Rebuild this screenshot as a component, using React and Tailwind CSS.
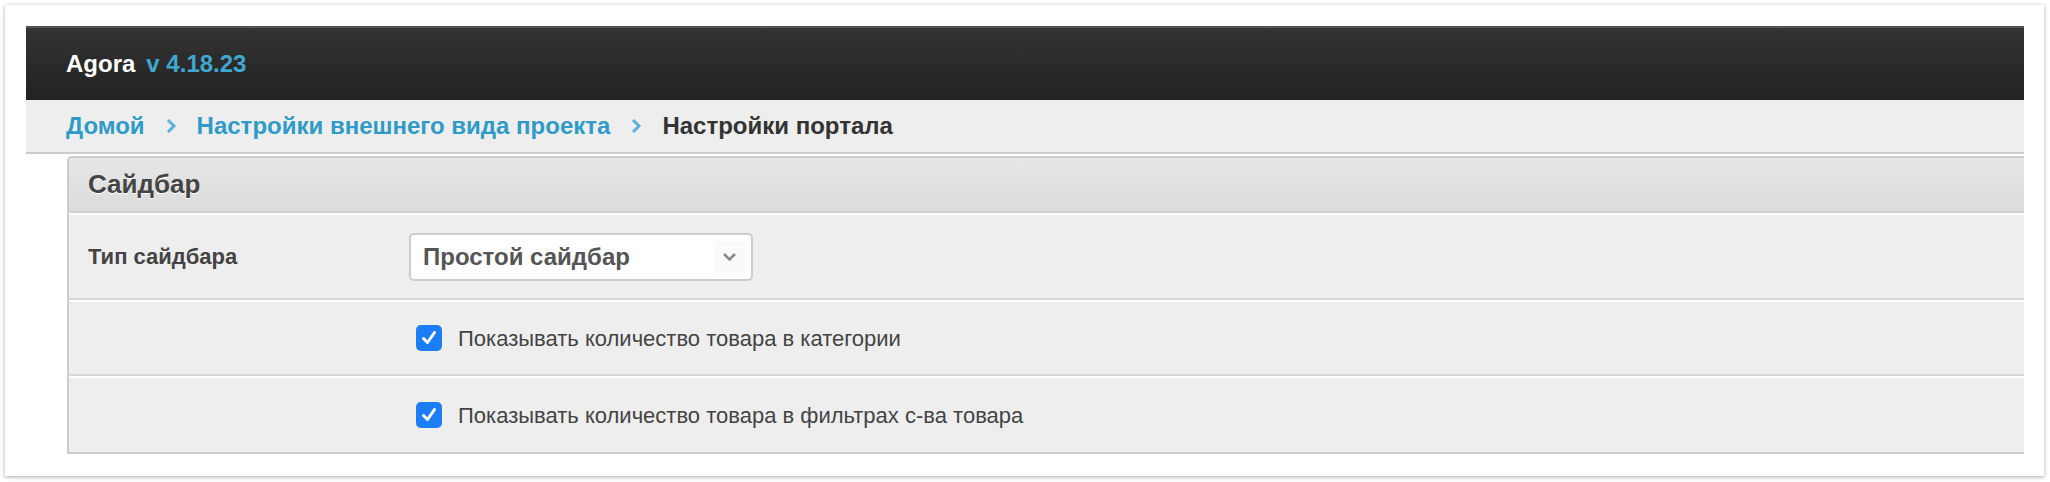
import React from "react";

const crumbs = [
  { label: "Домой", link: true },
  { label: "Настройки внешнего вида проекта", link: true },
  { label: "Настройки портала", link: false },
];

const options = [
  "Показывать количество товара в категории",
  "Показывать количество товара в фильтрах с-ва товара",
];

function Chevron() {
  return (
    <svg width="12" height="16" viewBox="0 0 12 16" className="mx-[20px]">
      <polyline points="3,2 9,8 3,14" fill="none" stroke="#5cb3d6" strokeWidth="3" />
    </svg>
  );
}

function Check() {
  return (
    <div className="w-[26px] h-[26px] rounded-[5px] bg-[#1b7ef6] flex items-center justify-center shrink-0">
      <svg width="18" height="18" viewBox="0 0 18 18">
        <polyline points="3.5,9.5 7.5,13.5 14.5,3.5" fill="none" stroke="#fff" strokeWidth="3" strokeLinecap="round" strokeLinejoin="round" />
      </svg>
    </div>
  );
}

export default function App() {
  return (
    <div className="w-[2050px] h-[482px] bg-white p-[5px] [font-family:'Liberation_Sans',Arial,sans-serif]">
      <div className="h-[471px] w-[2039px] bg-white shadow-[0_1px_4px_rgba(0,0,0,0.35)] pt-[21px] pl-[21px] pr-[20px] pb-[24px]">
        {/* top bar */}
        <div className="h-[74px] border-t-2 border-[#555] bg-gradient-to-b from-[#343434] to-[#222] flex items-center pl-[40px]">
          <span className="text-white font-bold text-[24px]">Agora</span>
          <span className="text-[#3fa8d0] font-bold text-[24px] ml-[11px]">v 4.18.23</span>
        </div>

        {/* breadcrumbs */}
        <div className="h-[54px] bg-[#eee] border-b-2 border-[#ccc] flex items-center pl-[40px]">
          {crumbs.map((c, i) => (
            <React.Fragment key={c.label}>
              {i > 0 && <Chevron />}
              <span className={`font-bold text-[24px] ${c.link ? "text-[#2f9bc6]" : "text-[#333]"}`}>{c.label}</span>
            </React.Fragment>
          ))}
        </div>

        {/* panel */}
        <div className="mt-[2px] ml-[41px] border-l-2 border-t-2 border-b-2 border-[#ccc] rounded-tl-[5px] overflow-hidden">
          <div className="h-[55px] bg-gradient-to-b from-[#e6e6e6] to-[#dcdcdc] border-b-2 border-[#d0d0d0] flex items-center pl-[19px]">
            <span className="font-bold text-[26px] text-[#444] [text-shadow:0_1px_0_#fff]">Сайдбар</span>
          </div>

          <div className="h-[87px] border-t-2 border-white border-b-2 border-b-[#d6d6d6] bg-[#eee] flex items-center">
            <div className="w-[340px] pl-[19px] font-bold text-[22px] text-[#444]">Тип сайдбара</div>
            <div className="w-[344px] h-[48px] bg-white border-2 border-[#ccc] rounded-[5px] flex items-center justify-between pl-[12px] pr-[6px]">
              <span className="font-bold text-[24px] text-[#555]">Простой сайдбар</span>
              <div className="w-[32px] h-[32px] bg-[#fafafa] flex items-center justify-center">
                <svg width="15" height="10" viewBox="0 0 15 10">
                  <polyline points="2,2 7.5,7.5 13,2" fill="none" stroke="#888" strokeWidth="2.5" />
                </svg>
              </div>
            </div>
          </div>

          {options.map((o, i) => (
            <div
              key={o}
              className={`h-[76px] border-t-2 border-white bg-[#eee] flex items-center pl-[347px] ${i === 0 ? "border-b-2 border-b-[#d6d6d6]" : ""}`}
            >
              <Check />
              <span className="ml-[16px] text-[22px] text-[#444]">{o}</span>
            </div>
          ))}
        </div>
      </div>
    </div>
  );
}
